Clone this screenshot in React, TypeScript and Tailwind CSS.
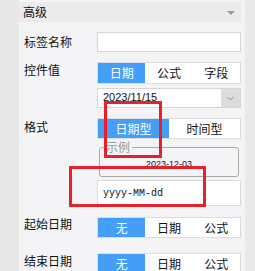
import { ChevronDown } from "lucide-react";

const cjk = "font-['Noto_Sans_CJK_SC','Liberation_Sans',sans-serif]";

function Segmented({ items, active = 0, h = "h-[21px]" }: { items: string[]; active?: number; h?: string }) {
  return (
    <div className={`flex w-[144px] ${h} border border-[#dcdcdc] bg-white`}>
      {items.map((t, i) => (
        <div
          key={i}
          className={`flex flex-1 items-center justify-center text-[12px] leading-none ${
            i === active ? "bg-[#459ef7] text-white" : "text-[#111]"
          }`}
        >
          {t}
        </div>
      ))}
    </div>
  );
}

export default function App() {
  return (
    <div className={`relative flex h-[271px] w-[255px] overflow-hidden bg-[#e9e9e9] ${cjk}`}>
      <div className="w-[19px] shrink-0 bg-[#e7e7e7]" />

      <div className="w-[226px] shrink-0 bg-[#f4f4f6] pt-[2px]">
        {/* header */}
        <div className="mr-[4px] flex h-[20px] items-center justify-between bg-[#ebebeb] pl-[4px] pr-[6px]">
          <span className="text-[12px] leading-none text-[#111]">高级</span>
          <span className="mt-[2px] h-0 w-0 border-x-[4px] border-t-[4px] border-x-transparent border-t-[#9a9a9a]" />
        </div>

        {/* 标签名称 */}
        <div className="mt-[10px] flex items-center">
          <div className="w-[78px] pl-[5px] text-[12px] leading-none text-[#111]">标签名称</div>
          <div className="h-[20px] w-[144px] border border-[#d6d6d6] bg-white" />
        </div>

        {/* 控件值 */}
        <div className="mt-[10px] flex">
          <div className="w-[78px] pl-[5px] pt-[2px] text-[12px] leading-none text-[#111]">控件值</div>
          <Segmented items={["日期", "公式", "字段"]} h="h-[22px]" />
        </div>

        <div className="mt-[4px] flex">
          <div className="w-[78px]" />
          <div className="flex h-[20px] w-[144px] border border-[#d6d6d6] bg-white">
            <div className="flex-1 pl-[5px] pt-[3px] font-['Liberation_Sans',sans-serif] text-[11px] leading-none text-[#111]">
              2023/11/15
            </div>
            <div className="flex w-[19px] items-center justify-center bg-[#dcdcdc]">
              <ChevronDown size={11} strokeWidth={1.4} className="text-[#666]" />
            </div>
          </div>
        </div>

        {/* 格式 */}
        <div className="mt-[10px] flex">
          <div className="w-[78px] pl-[5px] pt-[3px] text-[12px] leading-none text-[#111]">格式</div>
          <Segmented items={["日期型", "时间型"]} />
        </div>

        <div className="flex">
          <div className="w-[78px]" />
          <div className="w-[144px]">
            <fieldset className="mx-[2px] mt-[2px] h-[36px] rounded-[3px] border border-[#a8a8a8]">
              <legend className="ml-[4px] px-[2px] text-[12px] leading-[12px] text-[#9a9a9a]">示例</legend>
              <div className="pt-[7px] text-center font-['Liberation_Sans',sans-serif] text-[9px] leading-[9px] text-[#111]">
                2023-12-03
              </div>
            </fieldset>
            <div className="mt-[3px] flex h-[26px] items-center border border-[#dcdcdc] bg-white pl-[5px] font-['Liberation_Mono',monospace] text-[10px] text-[#111]">
              yyyy-MM-dd
            </div>
          </div>
        </div>

        {/* 起始日期 */}
        <div className="mt-[11px] flex">
          <div className="w-[78px] pl-[5px] pt-[1px] text-[12px] leading-none text-[#111]">起始日期</div>
          <Segmented items={["无", "日期", "公式"]} />
        </div>

        {/* 结束日期 */}
        <div className="mt-[15px] flex">
          <div className="w-[78px] pl-[5px] pt-[2px] text-[12px] leading-none text-[#111]">结束日期</div>
          <Segmented items={["无", "日期", "公式"]} />
        </div>
      </div>

      {/* annotation boxes */}
      <div className="pointer-events-none absolute left-[104px] top-[101px] h-[57px] w-[58px] border-[3px] border-[#e8202a]" />
      <div className="pointer-events-none absolute left-[69px] top-[166px] h-[41px] w-[137px] border-[3px] border-[#e8202a]" />
    </div>
  );
}
